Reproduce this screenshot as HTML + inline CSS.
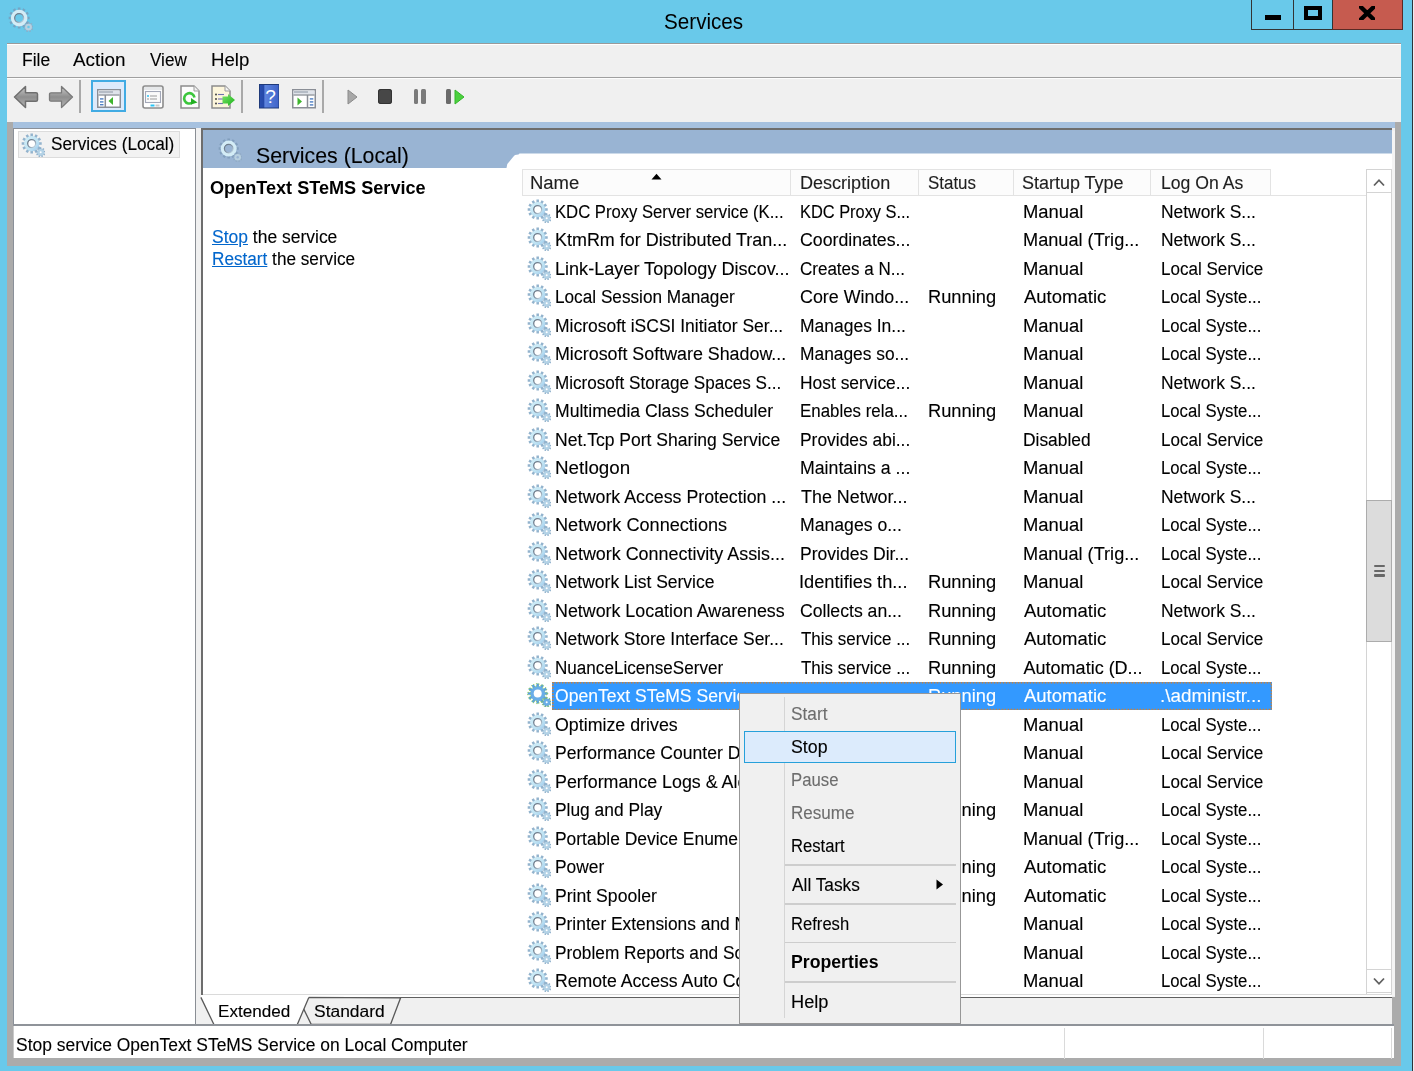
<!DOCTYPE html><html><head><meta charset="utf-8"><title>Services</title><style>
html,body{margin:0;padding:0;}body{width:1414px;height:1071px;position:relative;overflow:hidden;background:#69c9ea;font-family:"Liberation Sans", sans-serif;}
.t{position:absolute;white-space:nowrap;-webkit-text-stroke:0.12px currentColor;}
</style></head><body><div id="root" style="position:absolute;left:0;top:0;width:1414px;height:1071px;overflow:hidden;filter:blur(0.3px)">
<svg width="0" height="0" style="position:absolute">
<defs>
<linearGradient id="gb" x1="0" y1="0" x2="1" y2="1"><stop offset="0" stop-color="#d2eef8"/><stop offset="0.6" stop-color="#bfe3f3"/><stop offset="1" stop-color="#9cc8ec"/></linearGradient>
<linearGradient id="ring" x1="0" y1="0" x2="1" y2="1"><stop offset="0" stop-color="#5f6d7c"/><stop offset="0.55" stop-color="#8797a8"/><stop offset="1" stop-color="#cfe6f2"/></linearGradient>
<symbol id="gear" viewBox="0 0 24 24">
<path d="M9.46,3.71 L9.43,0.58 L11.97,0.58 L11.94,3.71 L13.07,4.01 L14.61,1.29 L16.81,2.56 L15.22,5.25 L16.05,6.08 L18.74,4.49 L20.01,6.69 L17.29,8.23 L17.59,9.36 L20.72,9.33 L20.72,11.87 L17.59,11.84 L17.29,12.97 L20.01,14.51 L18.74,16.71 L16.05,15.12 L15.22,15.95 L16.81,18.64 L14.61,19.91 L13.07,17.19 L11.94,17.49 L11.97,20.62 L9.43,20.62 L9.46,17.49 L8.33,17.19 L6.79,19.91 L4.59,18.64 L6.18,15.95 L5.35,15.12 L2.66,16.71 L1.39,14.51 L4.11,12.97 L3.81,11.84 L0.68,11.87 L0.68,9.33 L3.81,9.36 L4.11,8.23 L1.39,6.69 L2.66,4.49 L5.35,6.08 L6.18,5.25 L4.59,2.56 L6.79,1.29 L8.33,4.01Z" fill="#93b3cd"/>
<circle cx="10.7" cy="10.6" r="7.6" fill="url(#gb)"/>
<circle cx="10.7" cy="10.6" r="4.0" fill="#fff" stroke="url(#ring)" stroke-width="1.3"/>
<path d="M18.92,16.09 L18.88,14.47 L20.52,14.47 L20.48,16.09 L21.17,16.34 L22.18,15.07 L23.43,16.12 L22.36,17.34 L22.72,17.98 L24.32,17.66 L24.60,19.27 L22.99,19.51 L22.87,20.23 L24.29,21.01 L23.48,22.42 L22.09,21.58 L21.53,22.05 L22.12,23.56 L20.58,24.12 L20.07,22.58 L19.33,22.58 L18.82,24.12 L17.28,23.56 L17.87,22.05 L17.31,21.58 L15.92,22.42 L15.11,21.01 L16.53,20.23 L16.41,19.51 L14.80,19.27 L15.08,17.66 L16.68,17.98 L17.04,17.34 L15.97,16.12 L17.22,15.07 L18.23,16.34Z" fill="#8fb0cb"/>
<circle cx="19.7" cy="19.3" r="3.4" fill="#b3d2e6"/>
<circle cx="19.7" cy="19.3" r="1.0" fill="#fff"/>
</symbol>
<symbol id="gearsel" viewBox="0 0 24 24">
<path d="M9.46,3.71 L9.43,0.58 L11.97,0.58 L11.94,3.71 L13.07,4.01 L14.61,1.29 L16.81,2.56 L15.22,5.25 L16.05,6.08 L18.74,4.49 L20.01,6.69 L17.29,8.23 L17.59,9.36 L20.72,9.33 L20.72,11.87 L17.59,11.84 L17.29,12.97 L20.01,14.51 L18.74,16.71 L16.05,15.12 L15.22,15.95 L16.81,18.64 L14.61,19.91 L13.07,17.19 L11.94,17.49 L11.97,20.62 L9.43,20.62 L9.46,17.49 L8.33,17.19 L6.79,19.91 L4.59,18.64 L6.18,15.95 L5.35,15.12 L2.66,16.71 L1.39,14.51 L4.11,12.97 L3.81,11.84 L0.68,11.87 L0.68,9.33 L3.81,9.36 L4.11,8.23 L1.39,6.69 L2.66,4.49 L5.35,6.08 L6.18,5.25 L4.59,2.56 L6.79,1.29 L8.33,4.01Z" fill="#5aa0e0" stroke="#8fd23a" stroke-width="0.9" stroke-dasharray="1.2 1.6"/>
<circle cx="10.7" cy="10.6" r="7.3" fill="#6aaee8"/>
<circle cx="10.7" cy="10.6" r="4.0" fill="#fff"/>
<path d="M18.92,16.09 L18.88,14.47 L20.52,14.47 L20.48,16.09 L21.17,16.34 L22.18,15.07 L23.43,16.12 L22.36,17.34 L22.72,17.98 L24.32,17.66 L24.60,19.27 L22.99,19.51 L22.87,20.23 L24.29,21.01 L23.48,22.42 L22.09,21.58 L21.53,22.05 L22.12,23.56 L20.58,24.12 L20.07,22.58 L19.33,22.58 L18.82,24.12 L17.28,23.56 L17.87,22.05 L17.31,21.58 L15.92,22.42 L15.11,21.01 L16.53,20.23 L16.41,19.51 L14.80,19.27 L15.08,17.66 L16.68,17.98 L17.04,17.34 L15.97,16.12 L17.22,15.07 L18.23,16.34Z" fill="#5a9ad8" stroke="#8fd23a" stroke-width="0.8" stroke-dasharray="1 1.4"/>
<circle cx="19.7" cy="19.3" r="3.2" fill="#6aaee8"/>
<circle cx="19.7" cy="19.3" r="1.0" fill="#fff"/>
</symbol>
<symbol id="gearw" viewBox="0 0 24 24">
<path d="M9.46,3.71 L9.43,0.58 L11.97,0.58 L11.94,3.71 L13.07,4.01 L14.61,1.29 L16.81,2.56 L15.22,5.25 L16.05,6.08 L18.74,4.49 L20.01,6.69 L17.29,8.23 L17.59,9.36 L20.72,9.33 L20.72,11.87 L17.59,11.84 L17.29,12.97 L20.01,14.51 L18.74,16.71 L16.05,15.12 L15.22,15.95 L16.81,18.64 L14.61,19.91 L13.07,17.19 L11.94,17.49 L11.97,20.62 L9.43,20.62 L9.46,17.49 L8.33,17.19 L6.79,19.91 L4.59,18.64 L6.18,15.95 L5.35,15.12 L2.66,16.71 L1.39,14.51 L4.11,12.97 L3.81,11.84 L0.68,11.87 L0.68,9.33 L3.81,9.36 L4.11,8.23 L1.39,6.69 L2.66,4.49 L5.35,6.08 L6.18,5.25 L4.59,2.56 L6.79,1.29 L8.33,4.01Z" fill="#7896b4" opacity="0.7"/>
<circle cx="10.7" cy="10.6" r="8.0" fill="#d3ecf6"/>
<circle cx="10.7" cy="10.6" r="4.3" fill="var(--hole)" stroke="url(#ring)" stroke-width="1.2"/>
<path d="M18.92,16.09 L18.88,14.47 L20.52,14.47 L20.48,16.09 L21.17,16.34 L22.18,15.07 L23.43,16.12 L22.36,17.34 L22.72,17.98 L24.32,17.66 L24.60,19.27 L22.99,19.51 L22.87,20.23 L24.29,21.01 L23.48,22.42 L22.09,21.58 L21.53,22.05 L22.12,23.56 L20.58,24.12 L20.07,22.58 L19.33,22.58 L18.82,24.12 L17.28,23.56 L17.87,22.05 L17.31,21.58 L15.92,22.42 L15.11,21.01 L16.53,20.23 L16.41,19.51 L14.80,19.27 L15.08,17.66 L16.68,17.98 L17.04,17.34 L15.97,16.12 L17.22,15.07 L18.23,16.34Z" fill="#8fa9c3" opacity="0.85"/>
<circle cx="19.7" cy="19.3" r="3.3" fill="#b8d0e0"/>
<circle cx="19.7" cy="19.3" r="1.2" fill="var(--hole)"/>
</symbol>
</defs></svg>
<div style="position:absolute;left:0;top:0;width:1414px;height:1071px;--hole:#69c9ea">
<svg style="position:absolute;left:8px;top:7px;" width="25" height="25" viewBox="0 0 24 24"><use href="#gearw"/></svg>
</div>
<div class="t" style="left:663.84px;top:10.25px;font-size:21.5px;line-height:25.8px;font-weight:400;color:#000;transform:scaleX(0.9605);transform-origin:0 0;-webkit-text-stroke:0;">Services</div>
<div style="position:absolute;left:1412px;top:0px;width:1px;height:1071px;background:#2f3338"></div>
<div style="position:absolute;left:1413px;top:0px;width:1px;height:1071px;background:#e9eef3"></div>
<div style="position:absolute;left:1251px;top:0px;width:42.5px;height:29.5px;box-sizing:border-box;border-left:1px solid #333;border-bottom:1px solid #333;border-right:1px solid #333;background:#69c9ea"></div>
<div style="position:absolute;left:1264.6px;top:15.4px;width:16.6px;height:5px;background:#000"></div>
<div style="position:absolute;left:1293.5px;top:0px;width:39px;height:29.5px;box-sizing:border-box;border-bottom:1px solid #333;background:#69c9ea"></div>
<div style="position:absolute;left:1304px;top:5.5px;width:18.2px;height:14.5px;box-sizing:border-box;border:4px solid #000"></div>
<div style="position:absolute;left:1332.3px;top:0px;width:70.4px;height:29.7px;box-sizing:border-box;border-bottom:1px solid #5a2a25;border-right:1px solid #5a2a25;border-left:1px solid #333;background:#c65b4f"></div>
<svg style="position:absolute;left:1358.8px;top:5.5px" width="16.6" height="14.5" viewBox="0 0 16.6 14.5"><path d="M0.3,-0.5 L16.3,15 M16.3,-0.5 L0.3,15" stroke="#000" stroke-width="4.3"/></svg>
<div style="position:absolute;left:7px;top:43px;width:1394px;height:1022.6px;background:#ababab"></div>
<div style="position:absolute;left:7px;top:43px;width:1394px;height:34px;background:#f0f0f0;border-top:1px solid #9a9a9a;box-sizing:border-box"></div>
<div style="position:absolute;left:7px;top:44px;width:1394px;height:1px;background:#fff"></div>
<div class="t" style="left:21.73px;top:50.36px;font-size:18px;line-height:21.6px;font-weight:400;color:#000;transform:scaleX(0.9704);transform-origin:0 0;">File</div>
<div class="t" style="left:73.30px;top:50.36px;font-size:18px;line-height:21.6px;font-weight:400;color:#000;transform:scaleX(1.0469);transform-origin:0 0;">Action</div>
<div class="t" style="left:149.70px;top:50.36px;font-size:18px;line-height:21.6px;font-weight:400;color:#000;transform:scaleX(0.9513);transform-origin:0 0;">View</div>
<div class="t" style="left:210.57px;top:50.36px;font-size:18px;line-height:21.6px;font-weight:400;color:#000;transform:scaleX(1.0343);transform-origin:0 0;">Help</div>
<div style="position:absolute;left:7px;top:76.8px;width:1394px;height:1.5px;background:#a0a0a0"></div>
<div style="position:absolute;left:7px;top:78.3px;width:1394px;height:1px;background:#fdfdfd"></div>
<div style="position:absolute;left:7px;top:79.3px;width:1394px;height:42.7px;background:#f0f0f0"></div>
<svg width="0" height="0" style="position:absolute"><defs>
<linearGradient id="ar" x1="0" y1="0" x2="0" y2="1"><stop offset="0" stop-color="#c9c9c9"/><stop offset="0.5" stop-color="#8e8e8e"/><stop offset="1" stop-color="#b5b5b5"/></linearGradient>
<linearGradient id="grn" x1="0" y1="0" x2="1" y2="1"><stop offset="0" stop-color="#7ee36a"/><stop offset="1" stop-color="#19b319"/></linearGradient>
<linearGradient id="hlp" x1="0" y1="0" x2="1" y2="0"><stop offset="0" stop-color="#2a4fb0"/><stop offset="0.25" stop-color="#2448a8"/><stop offset="0.26" stop-color="#5f86df"/><stop offset="1" stop-color="#3e62c8"/></linearGradient>
</defs></svg>
<svg style="position:absolute;left:13px;top:85px" width="26" height="24" viewBox="0 0 26 24"><path d="M1.5,12 L12.5,1.5 L12.5,7.8 L23,7.8 Q24.5,7.8 24.5,9.3 L24.5,14.7 Q24.5,16.2 23,16.2 L12.5,16.2 L12.5,22.5 Z" fill="url(#ar)" stroke="#6f6f6f" stroke-width="1.5" stroke-linejoin="round"/></svg>
<svg style="position:absolute;left:48px;top:85px" width="26" height="24" viewBox="0 0 26 24"><path d="M24.5,12 L13.5,1.5 L13.5,7.8 L3,7.8 Q1.5,7.8 1.5,9.3 L1.5,14.7 Q1.5,16.2 3,16.2 L13.5,16.2 L13.5,22.5 Z" fill="url(#ar)" stroke="#7a7a7a" stroke-width="1.3" stroke-linejoin="round"/></svg>
<div style="position:absolute;left:79px;top:80px;width:1.5px;height:33px;background:#a9a9a9"></div>
<div style="position:absolute;left:91px;top:80.3px;width:35px;height:32.2px;box-sizing:border-box;border:2px solid #41abe3;background:#dceafb"></div>
<svg style="position:absolute;left:97px;top:89px" width="24" height="19" viewBox="0 0 24 19"><rect x="0.75" y="0.75" width="22.5" height="17.5" fill="#fff" stroke="#8a8e96" stroke-width="1.5"/><rect x="1.5" y="1.5" width="21" height="4" fill="#dfe3ea"/><line x1="2" y1="3" x2="16" y2="3" stroke="#9aa2ae" stroke-width="1.2"/><line x1="1.5" y1="6" x2="22.5" y2="6" stroke="#8a8e96" stroke-width="1.3"/><line x1="8.3" y1="6" x2="8.3" y2="18" stroke="#8a8e96" stroke-width="1.5"/><rect x="3" y="9.2" width="3.5" height="1.4" fill="#4f7fc4"/><rect x="3" y="12.2" width="3.5" height="1.4" fill="#4f7fc4"/><rect x="3" y="15" width="3.5" height="1.4" fill="#4f7fc4"/><path d="M11.5,12 L16,8 L16,16 Z" fill="#3fb52e"/></svg>
<svg style="position:absolute;left:142px;top:84.5px" width="22" height="24" viewBox="0 0 22 24"><rect x="1" y="1" width="20" height="22" rx="2" fill="#fff" stroke="#8c8c8c" stroke-width="1.6"/><rect x="2" y="2" width="18" height="3" fill="#e6e8ea"/><rect x="3.5" y="6.5" width="15" height="11" fill="#fafafa" stroke="#a3a8b8" stroke-width="1.1"/><circle cx="6" cy="11" r="1" fill="#2ec0f0"/><line x1="8" y1="11" x2="15" y2="11" stroke="#9a9a9a" stroke-width="1"/><circle cx="6" cy="14" r="0.8" fill="#888"/><line x1="8" y1="14" x2="15" y2="14" stroke="#9a9a9a" stroke-width="1"/><rect x="8.5" y="19.5" width="4" height="2" fill="#28c4f4"/><rect x="13.5" y="19.5" width="4" height="2" fill="#c8c8c8"/></svg>
<svg style="position:absolute;left:179.5px;top:84.5px" width="20" height="24" viewBox="0 0 20 24"><path d="M1,1 L14,1 L19,6 L19,23 L1,23 Z" fill="#fcfcfc" stroke="#8c8c8c" stroke-width="1.5"/><path d="M14,1 L14,6 L19,6" fill="#f0f0f0" stroke="#9c9c9c" stroke-width="1"/><path d="M12.5,17.5 A5.2,5.2 0 1 1 14.5,12.5" fill="none" stroke="#3cc63c" stroke-width="2.6"/><path d="M11,13 L17.5,17.5 L11,19.5 Z" fill="#22b022"/></svg>
<svg style="position:absolute;left:211px;top:84.5px" width="25" height="24" viewBox="0 0 25 24"><path d="M1,1 L14,1 L19,6 L19,23 L1,23 Z" fill="#fdf6dc" stroke="#8c8c8c" stroke-width="1.5"/><path d="M14,1 L14,6 L19,6" fill="#f4f4f4" stroke="#9c9c9c" stroke-width="1"/><circle cx="5" cy="9.5" r="0.9" fill="#333"/><line x1="7" y1="9.5" x2="13" y2="9.5" stroke="#7070b0" stroke-width="1.1"/><circle cx="5" cy="14" r="0.9" fill="#333"/><line x1="7" y1="14" x2="12" y2="14" stroke="#7070b0" stroke-width="1.1"/><circle cx="5" cy="18.5" r="0.9" fill="#333"/><line x1="7" y1="18.5" x2="12" y2="18.5" stroke="#7070b0" stroke-width="1.1"/><path d="M11.5,11.5 L17,11.5 L17,9 L24,15 L17,21 L17,18.5 L11.5,18.5 Z" fill="url(#grn)"/></svg>
<div style="position:absolute;left:241.3px;top:80px;width:1.5px;height:33px;background:#a9a9a9"></div>
<svg style="position:absolute;left:258.5px;top:84px" width="20.5" height="24.5" viewBox="0 0 20.5 24.5"><rect x="0.5" y="0.5" width="19.5" height="23.5" fill="url(#hlp)" stroke="#1f3a7a" stroke-width="1"/><text x="11.5" y="19" font-family="Liberation Sans" font-size="19" font-weight="400" fill="#fff" text-anchor="middle">?</text></svg>
<svg style="position:absolute;left:292px;top:88.5px" width="24" height="20" viewBox="0 0 24 20"><rect x="0.75" y="0.75" width="22.5" height="18" fill="#fff" stroke="#8a8e96" stroke-width="1.5"/><rect x="1.5" y="1.5" width="21" height="4" fill="#dfe3ea"/><line x1="2" y1="3" x2="16" y2="3" stroke="#9aa2ae" stroke-width="1.2"/><line x1="1.5" y1="6" x2="22.5" y2="6" stroke="#8a8e96" stroke-width="1.3"/><line x1="15.5" y1="6" x2="15.5" y2="19" stroke="#8a8e96" stroke-width="1.5"/><rect x="17.8" y="9.2" width="3.5" height="1.4" fill="#4f7fc4"/><rect x="17.8" y="12.2" width="3.5" height="1.4" fill="#4f7fc4"/><rect x="17.8" y="15.2" width="3.5" height="1.4" fill="#4f7fc4"/><path d="M5.5,8.5 L10,12.5 L5.5,16.5 Z" fill="#3fb52e"/></svg>
<div style="position:absolute;left:322.2px;top:80px;width:1.5px;height:33px;background:#a9a9a9"></div>
<svg style="position:absolute;left:347px;top:88.5px" width="11" height="16" viewBox="0 0 11 16"><path d="M1,1 L10,8 L1,15 Z" fill="#a8a8a8" stroke="#8a8a8a" stroke-width="1" stroke-linejoin="round"/></svg>
<div style="position:absolute;left:377.7px;top:89px;width:14.7px;height:15px;background:#474747;border-radius:3px;box-shadow:inset 0 0 0 1px #333"></div>
<div style="position:absolute;left:413.5px;top:89px;width:4.6px;height:15px;background:#7a7a7a;border-radius:1.5px"></div>
<div style="position:absolute;left:420.9px;top:89px;width:4.8px;height:15px;background:#7a7a7a;border-radius:1.5px"></div>
<div style="position:absolute;left:446.4px;top:89px;width:4.8px;height:15px;background:#6a6a6a;border-radius:1.5px"></div>
<svg style="position:absolute;left:453.5px;top:88.5px" width="11" height="16" viewBox="0 0 11 16"><path d="M1,1 L10,8 L1,15 Z" fill="#4bd13e" stroke="#33b52a" stroke-width="1" stroke-linejoin="round"/></svg>
<div style="position:absolute;left:13px;top:122px;width:1382.4px;height:6.3px;background:#a6c1df"></div>
<div style="position:absolute;left:13px;top:128.2px;width:183px;height:898.3px;box-sizing:border-box;background:#fff;border-left:1.1px solid #8a9099;border-top:1.4px solid #8a9099;border-right:1.2px solid #8a8e94"></div>
<div style="position:absolute;left:196px;top:128.2px;width:5px;height:868px;background:#f0f0f0"></div>
<div style="position:absolute;left:17.5px;top:131.2px;width:162px;height:26.4px;box-sizing:border-box;background:#f2f2f2;border:1.3px solid #dcdcdc"></div>
<svg style="position:absolute;left:20.5px;top:132.5px;" width="24" height="24" viewBox="0 0 24 24"><use href="#gear"/></svg>
<div class="t" style="left:50.84px;top:134.46px;font-size:18px;line-height:21.6px;font-weight:400;color:#000;transform:scaleX(0.9551);transform-origin:0 0;">Services (Local)</div>
<div style="position:absolute;left:201px;top:128.4px;width:1194.4px;height:868.6px;background:#f0f0f0"></div>
<div style="position:absolute;left:201px;top:128.4px;width:1191px;height:867.6px;box-sizing:border-box;background:#fff;border-top:2.6px solid #6d6d6d;border-left:2.6px solid #6d6d6d"></div>
<div style="position:absolute;left:1391.6px;top:131px;width:3px;height:865px;background:#f4f4f4"></div>
<div style="position:absolute;left:203.4px;top:130.4px;width:1188.2px;height:37.9px;background:#99b4d3"></div>
<svg style="position:absolute;left:500px;top:150px" width="892" height="20" viewBox="0 0 892 20"><path d="M6.4,18.6 L7.3,14 L9,12 L13.5,6.5 L15,5 L18.5,4.5 L19.5,3.4 L892,3.4 L892,20 L6,20 Z" fill="#fff"/></svg>
<svg style="position:absolute;left:218px;top:138.1px;--hole:#99b4d3" width="24" height="24" viewBox="0 0 24 24"><use href="#gearw"/></svg>
<div class="t" style="left:256.45px;top:142.00px;font-size:22.5px;line-height:27.0px;font-weight:400;color:#000;transform:scaleX(0.9472);transform-origin:0 0;">Services (Local)</div>
<div class="t" style="left:210.29px;top:177.56px;font-size:18px;line-height:21.6px;font-weight:700;color:#000;transform:scaleX(1.0056);transform-origin:0 0;-webkit-text-stroke:0;">OpenText STeMS Service</div>
<div class="t" style="left:211.50px;top:226.76px;font-size:18px;line-height:21.6px;font-weight:400;color:#000;transform:scaleX(0.9711);transform-origin:0 0;"><span style="color:#0066cc;text-decoration:underline">Stop</span> the service</div>
<div class="t" style="left:211.50px;top:248.96px;font-size:18px;line-height:21.6px;font-weight:400;color:#000;transform:scaleX(0.9537);transform-origin:0 0;"><span style="color:#0066cc;text-decoration:underline">Restart</span> the service</div>
<div style="position:absolute;left:522px;top:168.9px;width:749.4px;height:27.6px;box-sizing:border-box;background:#fcfcfc;border-top:1.3px solid #e3e3e3;border-bottom:1.3px solid #e3e3e3;border-left:1.3px solid #e3e3e3"></div>
<div style="position:absolute;left:1271.4px;top:195.2px;width:95px;height:1.3px;background:#e3e3e3"></div>
<div style="position:absolute;left:790.2px;top:168.9px;width:1.3px;height:27.6px;background:#e3e3e3"></div>
<div class="t" style="left:530.37px;top:172.96px;font-size:18px;line-height:21.6px;font-weight:400;color:#1e1e1e;transform:scaleX(1.0261);transform-origin:0 0;">Name</div>
<div style="position:absolute;left:918.2px;top:168.9px;width:1.3px;height:27.6px;background:#e3e3e3"></div>
<div class="t" style="left:800.30px;top:172.96px;font-size:18px;line-height:21.6px;font-weight:400;color:#1e1e1e;transform:scaleX(1.0023);transform-origin:0 0;">Description</div>
<div style="position:absolute;left:1013.2px;top:168.9px;width:1.3px;height:27.6px;background:#e3e3e3"></div>
<div class="t" style="left:928.06px;top:172.96px;font-size:18px;line-height:21.6px;font-weight:400;color:#1e1e1e;transform:scaleX(0.9400);transform-origin:0 0;">Status</div>
<div style="position:absolute;left:1149.9px;top:168.9px;width:1.3px;height:27.6px;background:#e3e3e3"></div>
<div class="t" style="left:1022.20px;top:172.96px;font-size:18px;line-height:21.6px;font-weight:400;color:#1e1e1e;transform:scaleX(0.9980);transform-origin:0 0;">Startup Type</div>
<div style="position:absolute;left:1270.1000000000001px;top:168.9px;width:1.3px;height:27.6px;background:#e3e3e3"></div>
<div class="t" style="left:1160.72px;top:172.96px;font-size:18px;line-height:21.6px;font-weight:400;color:#1e1e1e;transform:scaleX(0.9795);transform-origin:0 0;">Log On As</div>
<svg style="position:absolute;left:650.5px;top:172.5px" width="11" height="7" viewBox="0 0 11 7"><path d="M0.5,6.5 L5.5,0.8 L10.5,6.5 Z" fill="#000"/></svg>
<svg style="position:absolute;left:527.3px;top:198.7px;" width="24" height="24" viewBox="0 0 24 24"><use href="#gear"/></svg>
<div class="t" style="left:554.87px;top:201.56px;font-size:18px;line-height:21.6px;font-weight:400;color:#000;transform:scaleX(0.9253);transform-origin:0 0;">KDC Proxy Server service (K...</div>
<div class="t" style="left:800.39px;top:201.56px;font-size:18px;line-height:21.6px;font-weight:400;color:#000;transform:scaleX(0.9101);transform-origin:0 0;">KDC Proxy S...</div>
<div class="t" style="left:1022.58px;top:201.56px;font-size:18px;line-height:21.6px;font-weight:400;color:#000;transform:scaleX(1.0228);transform-origin:0 0;">Manual</div>
<div class="t" style="left:1161.13px;top:201.56px;font-size:18px;line-height:21.6px;font-weight:400;color:#000;transform:scaleX(0.9677);transform-origin:0 0;">Network S...</div>
<svg style="position:absolute;left:527.3px;top:227.2px;" width="24" height="24" viewBox="0 0 24 24"><use href="#gear"/></svg>
<div class="t" style="left:554.80px;top:230.06px;font-size:18px;line-height:21.6px;font-weight:400;color:#000;transform:scaleX(0.9965);transform-origin:0 0;">KtmRm for Distributed Tran...</div>
<div class="t" style="left:800.32px;top:230.06px;font-size:18px;line-height:21.6px;font-weight:400;color:#000;transform:scaleX(0.9845);transform-origin:0 0;">Coordinates...</div>
<div class="t" style="left:1022.59px;top:230.06px;font-size:18px;line-height:21.6px;font-weight:400;color:#000;transform:scaleX(1.0088);transform-origin:0 0;">Manual (Trig...</div>
<div class="t" style="left:1161.13px;top:230.06px;font-size:18px;line-height:21.6px;font-weight:400;color:#000;transform:scaleX(0.9677);transform-origin:0 0;">Network S...</div>
<svg style="position:absolute;left:527.3px;top:255.7px;" width="24" height="24" viewBox="0 0 24 24"><use href="#gear"/></svg>
<div class="t" style="left:554.80px;top:258.56px;font-size:18px;line-height:21.6px;font-weight:400;color:#000;transform:scaleX(1.0043);transform-origin:0 0;">Link-Layer Topology Discov...</div>
<div class="t" style="left:800.36px;top:258.56px;font-size:18px;line-height:21.6px;font-weight:400;color:#000;transform:scaleX(0.9450);transform-origin:0 0;">Creates a N...</div>
<div class="t" style="left:1022.58px;top:258.56px;font-size:18px;line-height:21.6px;font-weight:400;color:#000;transform:scaleX(1.0228);transform-origin:0 0;">Manual</div>
<div class="t" style="left:1161.15px;top:258.56px;font-size:18px;line-height:21.6px;font-weight:400;color:#000;transform:scaleX(0.9453);transform-origin:0 0;">Local Service</div>
<svg style="position:absolute;left:527.3px;top:284.2px;" width="24" height="24" viewBox="0 0 24 24"><use href="#gear"/></svg>
<div class="t" style="left:554.84px;top:287.06px;font-size:18px;line-height:21.6px;font-weight:400;color:#000;transform:scaleX(0.9551);transform-origin:0 0;">Local Session Manager</div>
<div class="t" style="left:800.31px;top:287.06px;font-size:18px;line-height:21.6px;font-weight:400;color:#000;transform:scaleX(0.9917);transform-origin:0 0;">Core Windo...</div>
<div class="t" style="left:927.78px;top:287.06px;font-size:18px;line-height:21.6px;font-weight:400;color:#000;transform:scaleX(1.0154);transform-origin:0 0;">Running</div>
<div class="t" style="left:1023.60px;top:287.06px;font-size:18px;line-height:21.6px;font-weight:400;color:#000;transform:scaleX(1.0275);transform-origin:0 0;">Automatic</div>
<div class="t" style="left:1161.17px;top:287.06px;font-size:18px;line-height:21.6px;font-weight:400;color:#000;transform:scaleX(0.9283);transform-origin:0 0;">Local Syste...</div>
<svg style="position:absolute;left:527.3px;top:312.7px;" width="24" height="24" viewBox="0 0 24 24"><use href="#gear"/></svg>
<div class="t" style="left:554.83px;top:315.56px;font-size:18px;line-height:21.6px;font-weight:400;color:#000;transform:scaleX(0.9708);transform-origin:0 0;">Microsoft iSCSI Initiator Ser...</div>
<div class="t" style="left:800.33px;top:315.56px;font-size:18px;line-height:21.6px;font-weight:400;color:#000;transform:scaleX(0.9710);transform-origin:0 0;">Manages In...</div>
<div class="t" style="left:1022.58px;top:315.56px;font-size:18px;line-height:21.6px;font-weight:400;color:#000;transform:scaleX(1.0228);transform-origin:0 0;">Manual</div>
<div class="t" style="left:1161.17px;top:315.56px;font-size:18px;line-height:21.6px;font-weight:400;color:#000;transform:scaleX(0.9283);transform-origin:0 0;">Local Syste...</div>
<svg style="position:absolute;left:527.3px;top:341.2px;" width="24" height="24" viewBox="0 0 24 24"><use href="#gear"/></svg>
<div class="t" style="left:554.81px;top:344.06px;font-size:18px;line-height:21.6px;font-weight:400;color:#000;transform:scaleX(0.9918);transform-origin:0 0;">Microsoft Software Shadow...</div>
<div class="t" style="left:800.34px;top:344.06px;font-size:18px;line-height:21.6px;font-weight:400;color:#000;transform:scaleX(0.9649);transform-origin:0 0;">Manages so...</div>
<div class="t" style="left:1022.58px;top:344.06px;font-size:18px;line-height:21.6px;font-weight:400;color:#000;transform:scaleX(1.0228);transform-origin:0 0;">Manual</div>
<div class="t" style="left:1161.17px;top:344.06px;font-size:18px;line-height:21.6px;font-weight:400;color:#000;transform:scaleX(0.9283);transform-origin:0 0;">Local Syste...</div>
<svg style="position:absolute;left:527.3px;top:369.7px;" width="24" height="24" viewBox="0 0 24 24"><use href="#gear"/></svg>
<div class="t" style="left:554.85px;top:372.56px;font-size:18px;line-height:21.6px;font-weight:400;color:#000;transform:scaleX(0.9500);transform-origin:0 0;">Microsoft Storage Spaces S...</div>
<div class="t" style="left:800.33px;top:372.56px;font-size:18px;line-height:21.6px;font-weight:400;color:#000;transform:scaleX(0.9670);transform-origin:0 0;">Host service...</div>
<div class="t" style="left:1022.58px;top:372.56px;font-size:18px;line-height:21.6px;font-weight:400;color:#000;transform:scaleX(1.0228);transform-origin:0 0;">Manual</div>
<div class="t" style="left:1161.13px;top:372.56px;font-size:18px;line-height:21.6px;font-weight:400;color:#000;transform:scaleX(0.9677);transform-origin:0 0;">Network S...</div>
<svg style="position:absolute;left:527.3px;top:398.2px;" width="24" height="24" viewBox="0 0 24 24"><use href="#gear"/></svg>
<div class="t" style="left:554.82px;top:401.06px;font-size:18px;line-height:21.6px;font-weight:400;color:#000;transform:scaleX(0.9779);transform-origin:0 0;">Multimedia Class Scheduler</div>
<div class="t" style="left:800.36px;top:401.06px;font-size:18px;line-height:21.6px;font-weight:400;color:#000;transform:scaleX(0.9372);transform-origin:0 0;">Enables rela...</div>
<div class="t" style="left:927.78px;top:401.06px;font-size:18px;line-height:21.6px;font-weight:400;color:#000;transform:scaleX(1.0154);transform-origin:0 0;">Running</div>
<div class="t" style="left:1022.58px;top:401.06px;font-size:18px;line-height:21.6px;font-weight:400;color:#000;transform:scaleX(1.0228);transform-origin:0 0;">Manual</div>
<div class="t" style="left:1161.17px;top:401.06px;font-size:18px;line-height:21.6px;font-weight:400;color:#000;transform:scaleX(0.9283);transform-origin:0 0;">Local Syste...</div>
<svg style="position:absolute;left:527.3px;top:426.7px;" width="24" height="24" viewBox="0 0 24 24"><use href="#gear"/></svg>
<div class="t" style="left:554.83px;top:429.56px;font-size:18px;line-height:21.6px;font-weight:400;color:#000;transform:scaleX(0.9742);transform-origin:0 0;">Net.Tcp Port Sharing Service</div>
<div class="t" style="left:800.33px;top:429.56px;font-size:18px;line-height:21.6px;font-weight:400;color:#000;transform:scaleX(0.9670);transform-origin:0 0;">Provides abi...</div>
<div class="t" style="left:1022.63px;top:429.56px;font-size:18px;line-height:21.6px;font-weight:400;color:#000;transform:scaleX(0.9662);transform-origin:0 0;">Disabled</div>
<div class="t" style="left:1161.15px;top:429.56px;font-size:18px;line-height:21.6px;font-weight:400;color:#000;transform:scaleX(0.9453);transform-origin:0 0;">Local Service</div>
<svg style="position:absolute;left:527.3px;top:455.2px;" width="24" height="24" viewBox="0 0 24 24"><use href="#gear"/></svg>
<div class="t" style="left:554.76px;top:458.06px;font-size:18px;line-height:21.6px;font-weight:400;color:#000;transform:scaleX(1.0429);transform-origin:0 0;">Netlogon</div>
<div class="t" style="left:800.32px;top:458.06px;font-size:18px;line-height:21.6px;font-weight:400;color:#000;transform:scaleX(0.9845);transform-origin:0 0;">Maintains a ...</div>
<div class="t" style="left:1022.58px;top:458.06px;font-size:18px;line-height:21.6px;font-weight:400;color:#000;transform:scaleX(1.0228);transform-origin:0 0;">Manual</div>
<div class="t" style="left:1161.17px;top:458.06px;font-size:18px;line-height:21.6px;font-weight:400;color:#000;transform:scaleX(0.9283);transform-origin:0 0;">Local Syste...</div>
<svg style="position:absolute;left:527.3px;top:483.7px;" width="24" height="24" viewBox="0 0 24 24"><use href="#gear"/></svg>
<div class="t" style="left:554.81px;top:486.56px;font-size:18px;line-height:21.6px;font-weight:400;color:#000;transform:scaleX(0.9875);transform-origin:0 0;">Network Access Protection ...</div>
<div class="t" style="left:801.30px;top:486.56px;font-size:18px;line-height:21.6px;font-weight:400;color:#000;transform:scaleX(0.9943);transform-origin:0 0;">The Networ...</div>
<div class="t" style="left:1022.58px;top:486.56px;font-size:18px;line-height:21.6px;font-weight:400;color:#000;transform:scaleX(1.0228);transform-origin:0 0;">Manual</div>
<div class="t" style="left:1161.13px;top:486.56px;font-size:18px;line-height:21.6px;font-weight:400;color:#000;transform:scaleX(0.9677);transform-origin:0 0;">Network S...</div>
<svg style="position:absolute;left:527.3px;top:512.2px;" width="24" height="24" viewBox="0 0 24 24"><use href="#gear"/></svg>
<div class="t" style="left:554.79px;top:515.06px;font-size:18px;line-height:21.6px;font-weight:400;color:#000;transform:scaleX(1.0059);transform-origin:0 0;">Network Connections</div>
<div class="t" style="left:800.32px;top:515.06px;font-size:18px;line-height:21.6px;font-weight:400;color:#000;transform:scaleX(0.9794);transform-origin:0 0;">Manages o...</div>
<div class="t" style="left:1022.58px;top:515.06px;font-size:18px;line-height:21.6px;font-weight:400;color:#000;transform:scaleX(1.0228);transform-origin:0 0;">Manual</div>
<div class="t" style="left:1161.17px;top:515.06px;font-size:18px;line-height:21.6px;font-weight:400;color:#000;transform:scaleX(0.9283);transform-origin:0 0;">Local Syste...</div>
<svg style="position:absolute;left:527.3px;top:540.7px;" width="24" height="24" viewBox="0 0 24 24"><use href="#gear"/></svg>
<div class="t" style="left:554.80px;top:543.56px;font-size:18px;line-height:21.6px;font-weight:400;color:#000;transform:scaleX(0.9952);transform-origin:0 0;">Network Connectivity Assis...</div>
<div class="t" style="left:800.33px;top:543.56px;font-size:18px;line-height:21.6px;font-weight:400;color:#000;transform:scaleX(0.9736);transform-origin:0 0;">Provides Dir...</div>
<div class="t" style="left:1022.59px;top:543.56px;font-size:18px;line-height:21.6px;font-weight:400;color:#000;transform:scaleX(1.0088);transform-origin:0 0;">Manual (Trig...</div>
<div class="t" style="left:1161.17px;top:543.56px;font-size:18px;line-height:21.6px;font-weight:400;color:#000;transform:scaleX(0.9283);transform-origin:0 0;">Local Syste...</div>
<svg style="position:absolute;left:527.3px;top:569.2px;" width="24" height="24" viewBox="0 0 24 24"><use href="#gear"/></svg>
<div class="t" style="left:554.83px;top:572.06px;font-size:18px;line-height:21.6px;font-weight:400;color:#000;transform:scaleX(0.9722);transform-origin:0 0;">Network List Service</div>
<div class="t" style="left:799.27px;top:572.06px;font-size:18px;line-height:21.6px;font-weight:400;color:#000;transform:scaleX(1.0135);transform-origin:0 0;">Identifies th...</div>
<div class="t" style="left:927.78px;top:572.06px;font-size:18px;line-height:21.6px;font-weight:400;color:#000;transform:scaleX(1.0154);transform-origin:0 0;">Running</div>
<div class="t" style="left:1022.58px;top:572.06px;font-size:18px;line-height:21.6px;font-weight:400;color:#000;transform:scaleX(1.0228);transform-origin:0 0;">Manual</div>
<div class="t" style="left:1161.15px;top:572.06px;font-size:18px;line-height:21.6px;font-weight:400;color:#000;transform:scaleX(0.9453);transform-origin:0 0;">Local Service</div>
<svg style="position:absolute;left:527.3px;top:597.7px;" width="24" height="24" viewBox="0 0 24 24"><use href="#gear"/></svg>
<div class="t" style="left:554.81px;top:600.56px;font-size:18px;line-height:21.6px;font-weight:400;color:#000;transform:scaleX(0.9909);transform-origin:0 0;">Network Location Awareness</div>
<div class="t" style="left:800.32px;top:600.56px;font-size:18px;line-height:21.6px;font-weight:400;color:#000;transform:scaleX(0.9794);transform-origin:0 0;">Collects an...</div>
<div class="t" style="left:927.78px;top:600.56px;font-size:18px;line-height:21.6px;font-weight:400;color:#000;transform:scaleX(1.0154);transform-origin:0 0;">Running</div>
<div class="t" style="left:1023.60px;top:600.56px;font-size:18px;line-height:21.6px;font-weight:400;color:#000;transform:scaleX(1.0275);transform-origin:0 0;">Automatic</div>
<div class="t" style="left:1161.13px;top:600.56px;font-size:18px;line-height:21.6px;font-weight:400;color:#000;transform:scaleX(0.9677);transform-origin:0 0;">Network S...</div>
<svg style="position:absolute;left:527.3px;top:626.2px;" width="24" height="24" viewBox="0 0 24 24"><use href="#gear"/></svg>
<div class="t" style="left:554.83px;top:629.06px;font-size:18px;line-height:21.6px;font-weight:400;color:#000;transform:scaleX(0.9688);transform-origin:0 0;">Network Store Interface Ser...</div>
<div class="t" style="left:801.30px;top:629.06px;font-size:18px;line-height:21.6px;font-weight:400;color:#000;transform:scaleX(0.9417);transform-origin:0 0;">This service ...</div>
<div class="t" style="left:927.78px;top:629.06px;font-size:18px;line-height:21.6px;font-weight:400;color:#000;transform:scaleX(1.0154);transform-origin:0 0;">Running</div>
<div class="t" style="left:1023.60px;top:629.06px;font-size:18px;line-height:21.6px;font-weight:400;color:#000;transform:scaleX(1.0275);transform-origin:0 0;">Automatic</div>
<div class="t" style="left:1161.15px;top:629.06px;font-size:18px;line-height:21.6px;font-weight:400;color:#000;transform:scaleX(0.9453);transform-origin:0 0;">Local Service</div>
<svg style="position:absolute;left:527.3px;top:654.7px;" width="24" height="24" viewBox="0 0 24 24"><use href="#gear"/></svg>
<div class="t" style="left:554.85px;top:657.56px;font-size:18px;line-height:21.6px;font-weight:400;color:#000;transform:scaleX(0.9494);transform-origin:0 0;">NuanceLicenseServer</div>
<div class="t" style="left:801.30px;top:657.56px;font-size:18px;line-height:21.6px;font-weight:400;color:#000;transform:scaleX(0.9417);transform-origin:0 0;">This service ...</div>
<div class="t" style="left:927.78px;top:657.56px;font-size:18px;line-height:21.6px;font-weight:400;color:#000;transform:scaleX(1.0154);transform-origin:0 0;">Running</div>
<div class="t" style="left:1023.60px;top:657.56px;font-size:18px;line-height:21.6px;font-weight:400;color:#000;transform:scaleX(1.0000);transform-origin:0 0;">Automatic (D...</div>
<div class="t" style="left:1161.17px;top:657.56px;font-size:18px;line-height:21.6px;font-weight:400;color:#000;transform:scaleX(0.9283);transform-origin:0 0;">Local Syste...</div>
<div style="position:absolute;left:551.8px;top:682.0px;width:720.4px;height:28.2px;background:#3399ff"></div>
<svg style="position:absolute;left:551.8px;top:682.0px" width="720.4" height="28.2" viewBox="0 0 720.4 28.2"><rect x="0.75" y="0.75" width="718.9" height="26.7" fill="none" stroke="#c8823e" stroke-width="1.5" stroke-dasharray="1.6 1.4"/></svg>
<svg style="position:absolute;left:527.3px;top:683.2px;" width="24" height="24" viewBox="0 0 24 24"><use href="#gearsel"/></svg>
<div class="t" style="left:554.80px;top:686.06px;font-size:18px;line-height:21.6px;font-weight:400;color:#fff;transform:scaleX(0.975);transform-origin:0 0;">OpenText STeMS Service</div>
<div class="t" style="left:927.78px;top:686.06px;font-size:18px;line-height:21.6px;font-weight:400;color:#fff;transform:scaleX(1.0154);transform-origin:0 0;">Running</div>
<div class="t" style="left:1023.60px;top:686.06px;font-size:18px;line-height:21.6px;font-weight:400;color:#fff;transform:scaleX(1.0275);transform-origin:0 0;">Automatic</div>
<div class="t" style="left:1160.01px;top:686.06px;font-size:18px;line-height:21.6px;font-weight:400;color:#fff;transform:scaleX(1.0468);transform-origin:0 0;">.\administr...</div>
<svg style="position:absolute;left:527.3px;top:711.7px;" width="24" height="24" viewBox="0 0 24 24"><use href="#gear"/></svg>
<div class="t" style="left:554.81px;top:714.56px;font-size:18px;line-height:21.6px;font-weight:400;color:#000;transform:scaleX(0.9894);transform-origin:0 0;">Optimize drives</div>
<div class="t" style="left:1022.58px;top:714.56px;font-size:18px;line-height:21.6px;font-weight:400;color:#000;transform:scaleX(1.0228);transform-origin:0 0;">Manual</div>
<div class="t" style="left:1161.17px;top:714.56px;font-size:18px;line-height:21.6px;font-weight:400;color:#000;transform:scaleX(0.9283);transform-origin:0 0;">Local Syste...</div>
<svg style="position:absolute;left:527.3px;top:740.2px;" width="24" height="24" viewBox="0 0 24 24"><use href="#gear"/></svg>
<div class="t" style="left:554.80px;top:743.06px;font-size:18px;line-height:21.6px;font-weight:400;color:#000;transform:scaleX(0.975);transform-origin:0 0;">Performance Counter DLL Host</div>
<div class="t" style="left:1022.58px;top:743.06px;font-size:18px;line-height:21.6px;font-weight:400;color:#000;transform:scaleX(1.0228);transform-origin:0 0;">Manual</div>
<div class="t" style="left:1161.15px;top:743.06px;font-size:18px;line-height:21.6px;font-weight:400;color:#000;transform:scaleX(0.9453);transform-origin:0 0;">Local Service</div>
<svg style="position:absolute;left:527.3px;top:768.7px;" width="24" height="24" viewBox="0 0 24 24"><use href="#gear"/></svg>
<div class="t" style="left:554.80px;top:771.56px;font-size:18px;line-height:21.6px;font-weight:400;color:#000;transform:scaleX(0.991);transform-origin:0 0;">Performance Logs &amp; Alerts</div>
<div class="t" style="left:1022.58px;top:771.56px;font-size:18px;line-height:21.6px;font-weight:400;color:#000;transform:scaleX(1.0228);transform-origin:0 0;">Manual</div>
<div class="t" style="left:1161.15px;top:771.56px;font-size:18px;line-height:21.6px;font-weight:400;color:#000;transform:scaleX(0.9453);transform-origin:0 0;">Local Service</div>
<svg style="position:absolute;left:527.3px;top:797.2px;" width="24" height="24" viewBox="0 0 24 24"><use href="#gear"/></svg>
<div class="t" style="left:554.83px;top:800.06px;font-size:18px;line-height:21.6px;font-weight:400;color:#000;transform:scaleX(0.9655);transform-origin:0 0;">Plug and Play</div>
<div class="t" style="left:927.78px;top:800.06px;font-size:18px;line-height:21.6px;font-weight:400;color:#000;transform:scaleX(1.0154);transform-origin:0 0;">Running</div>
<div class="t" style="left:1022.58px;top:800.06px;font-size:18px;line-height:21.6px;font-weight:400;color:#000;transform:scaleX(1.0228);transform-origin:0 0;">Manual</div>
<div class="t" style="left:1161.17px;top:800.06px;font-size:18px;line-height:21.6px;font-weight:400;color:#000;transform:scaleX(0.9283);transform-origin:0 0;">Local Syste...</div>
<svg style="position:absolute;left:527.3px;top:825.7px;" width="24" height="24" viewBox="0 0 24 24"><use href="#gear"/></svg>
<div class="t" style="left:554.80px;top:828.56px;font-size:18px;line-height:21.6px;font-weight:400;color:#000;transform:scaleX(0.968);transform-origin:0 0;">Portable Device Enumerator...</div>
<div class="t" style="left:1022.59px;top:828.56px;font-size:18px;line-height:21.6px;font-weight:400;color:#000;transform:scaleX(1.0088);transform-origin:0 0;">Manual (Trig...</div>
<div class="t" style="left:1161.17px;top:828.56px;font-size:18px;line-height:21.6px;font-weight:400;color:#000;transform:scaleX(0.9283);transform-origin:0 0;">Local Syste...</div>
<svg style="position:absolute;left:527.3px;top:854.2px;" width="24" height="24" viewBox="0 0 24 24"><use href="#gear"/></svg>
<div class="t" style="left:554.84px;top:857.06px;font-size:18px;line-height:21.6px;font-weight:400;color:#000;transform:scaleX(0.9640);transform-origin:0 0;">Power</div>
<div class="t" style="left:927.78px;top:857.06px;font-size:18px;line-height:21.6px;font-weight:400;color:#000;transform:scaleX(1.0154);transform-origin:0 0;">Running</div>
<div class="t" style="left:1023.60px;top:857.06px;font-size:18px;line-height:21.6px;font-weight:400;color:#000;transform:scaleX(1.0275);transform-origin:0 0;">Automatic</div>
<div class="t" style="left:1161.17px;top:857.06px;font-size:18px;line-height:21.6px;font-weight:400;color:#000;transform:scaleX(0.9283);transform-origin:0 0;">Local Syste...</div>
<svg style="position:absolute;left:527.3px;top:882.7px;" width="24" height="24" viewBox="0 0 24 24"><use href="#gear"/></svg>
<div class="t" style="left:554.82px;top:885.56px;font-size:18px;line-height:21.6px;font-weight:400;color:#000;transform:scaleX(0.9786);transform-origin:0 0;">Print Spooler</div>
<div class="t" style="left:927.78px;top:885.56px;font-size:18px;line-height:21.6px;font-weight:400;color:#000;transform:scaleX(1.0154);transform-origin:0 0;">Running</div>
<div class="t" style="left:1023.60px;top:885.56px;font-size:18px;line-height:21.6px;font-weight:400;color:#000;transform:scaleX(1.0275);transform-origin:0 0;">Automatic</div>
<div class="t" style="left:1161.17px;top:885.56px;font-size:18px;line-height:21.6px;font-weight:400;color:#000;transform:scaleX(0.9283);transform-origin:0 0;">Local Syste...</div>
<svg style="position:absolute;left:527.3px;top:911.2px;" width="24" height="24" viewBox="0 0 24 24"><use href="#gear"/></svg>
<div class="t" style="left:554.80px;top:914.06px;font-size:18px;line-height:21.6px;font-weight:400;color:#000;transform:scaleX(0.965);transform-origin:0 0;">Printer Extensions and No...</div>
<div class="t" style="left:1022.58px;top:914.06px;font-size:18px;line-height:21.6px;font-weight:400;color:#000;transform:scaleX(1.0228);transform-origin:0 0;">Manual</div>
<div class="t" style="left:1161.17px;top:914.06px;font-size:18px;line-height:21.6px;font-weight:400;color:#000;transform:scaleX(0.9283);transform-origin:0 0;">Local Syste...</div>
<svg style="position:absolute;left:527.3px;top:939.7px;" width="24" height="24" viewBox="0 0 24 24"><use href="#gear"/></svg>
<div class="t" style="left:554.80px;top:942.56px;font-size:18px;line-height:21.6px;font-weight:400;color:#000;transform:scaleX(0.959);transform-origin:0 0;">Problem Reports and Soluti...</div>
<div class="t" style="left:1022.58px;top:942.56px;font-size:18px;line-height:21.6px;font-weight:400;color:#000;transform:scaleX(1.0228);transform-origin:0 0;">Manual</div>
<div class="t" style="left:1161.17px;top:942.56px;font-size:18px;line-height:21.6px;font-weight:400;color:#000;transform:scaleX(0.9283);transform-origin:0 0;">Local Syste...</div>
<svg style="position:absolute;left:527.3px;top:968.2px;" width="24" height="24" viewBox="0 0 24 24"><use href="#gear"/></svg>
<div class="t" style="left:554.80px;top:971.06px;font-size:18px;line-height:21.6px;font-weight:400;color:#000;transform:scaleX(0.981);transform-origin:0 0;">Remote Access Auto Conne...</div>
<div class="t" style="left:1022.58px;top:971.06px;font-size:18px;line-height:21.6px;font-weight:400;color:#000;transform:scaleX(1.0228);transform-origin:0 0;">Manual</div>
<div class="t" style="left:1161.17px;top:971.06px;font-size:18px;line-height:21.6px;font-weight:400;color:#000;transform:scaleX(0.9283);transform-origin:0 0;">Local Syste...</div>
<div style="position:absolute;left:1366px;top:168.9px;width:25.6px;height:825px;box-sizing:border-box;background:#fff;border-left:1.3px solid #d4d4d4;border-right:1.3px solid #d4d4d4"></div>
<div style="position:absolute;left:1366px;top:168.9px;width:25.6px;height:24.6px;box-sizing:border-box;background:#fff;border:1.3px solid #d4d4d4"></div>
<svg style="position:absolute;left:1373.2px;top:178.3px" width="12" height="9" viewBox="0 0 12 9"><path d="M1,7.5 L6,2.2 L11,7.5" fill="none" stroke="#606060" stroke-width="1.8"/></svg>
<div style="position:absolute;left:1366px;top:968.6px;width:25.6px;height:24.8px;box-sizing:border-box;background:#fff;border:1.3px solid #d4d4d4"></div>
<svg style="position:absolute;left:1373.2px;top:976.8px" width="12" height="9" viewBox="0 0 12 9"><path d="M1,1.5 L6,6.8 L11,1.5" fill="none" stroke="#606060" stroke-width="1.8"/></svg>
<div style="position:absolute;left:1366px;top:499.6px;width:25.6px;height:142.5px;box-sizing:border-box;background:#dcdcdc;border:1.7px solid #acacac"></div>
<div style="position:absolute;left:1374px;top:564.9px;width:10.5px;height:2.6px;background:#686868;border-radius:1px"></div>
<div style="position:absolute;left:1374px;top:569.5px;width:10.5px;height:2.6px;background:#686868;border-radius:1px"></div>
<div style="position:absolute;left:1374px;top:574.1px;width:10.5px;height:2.6px;background:#686868;border-radius:1px"></div>
<div style="position:absolute;left:203.4px;top:993.8px;width:1188.2px;height:1.4px;background:#dadada"></div>
<div style="position:absolute;left:203.4px;top:995.2px;width:1188.2px;height:2px;background:#fff"></div>
<div style="position:absolute;left:203.4px;top:997.2px;width:1188.2px;height:27.3px;background:#f0f0f0"></div>
<div style="position:absolute;left:300px;top:997.1px;width:1091.6px;height:1.4px;background:#5f5f5f"></div>
<div style="position:absolute;left:196px;top:996px;width:7.4px;height:28.5px;background:#f0f0f0"></div>
<svg style="position:absolute;left:195px;top:994px" width="220" height="32" viewBox="0 0 220 32"><path d="M103,3.4 L205.6,3.8 L195.5,30.5 L116.3,30.5 Z" fill="#f0f0f0" stroke="#5a5a5a" stroke-width="1.3"/><path d="M5.9,1 L113.8,1 L113.8,3.4 L102.4,30.3 L18.8,30.3 L5.9,3.4 Z" fill="#fff"/><path d="M5.9,3.4 L18.8,30.3 M102.4,30.3 L113.8,3.4" fill="none" stroke="#5a5a5a" stroke-width="1.3"/></svg>
<div class="t" style="left:217.96px;top:1001.68px;font-size:16.5px;line-height:19.8px;font-weight:400;color:#000;transform:scaleX(1.0368);transform-origin:0 0;">Extended</div>
<div class="t" style="left:313.94px;top:1001.68px;font-size:16.5px;line-height:19.8px;font-weight:400;color:#000;transform:scaleX(1.0569);transform-origin:0 0;">Standard</div>
<div style="position:absolute;left:13px;top:1024.3px;width:1381px;height:1.6px;background:#8f9399"></div>
<div style="position:absolute;left:13px;top:1025.9px;width:1381px;height:32.6px;background:#fff;box-sizing:border-box;border-left:1px solid #c9c9c9"></div>
<div style="position:absolute;left:1063.8px;top:1028px;width:1.3px;height:30.5px;background:#dadada"></div>
<div style="position:absolute;left:1263px;top:1028px;width:1.3px;height:30.5px;background:#dadada"></div>
<div style="position:absolute;left:1390.6px;top:1028px;width:1.3px;height:30.5px;background:#dadada"></div>
<div class="t" style="left:15.53px;top:1034.56px;font-size:18px;line-height:21.6px;font-weight:400;color:#000;transform:scaleX(0.9688);transform-origin:0 0;">Stop service OpenText STeMS Service on Local Computer</div>
<div style="position:absolute;left:739px;top:684.2px;width:30px;height:9px;background:#3399ff"></div>
<div style="position:absolute;left:739px;top:693px;width:222px;height:330.5px;box-sizing:border-box;background:#f0f0f0;border:1.5px solid #979797"></div>
<div style="position:absolute;left:784px;top:697px;width:1.3px;height:321px;background:#d5d5d5"></div>
<div style="position:absolute;left:743.8px;top:730.9px;width:212.3px;height:31.8px;box-sizing:border-box;background:#dcebfc;border:1.6px solid #26a0da"></div>
<div class="t" style="left:791.31px;top:703.94px;font-size:17.5px;line-height:21.0px;font-weight:400;color:#6d6d6d;transform:scaleX(0.9861);transform-origin:0 0;">Start</div>
<div class="t" style="left:791.29px;top:736.64px;font-size:17.5px;line-height:21.0px;font-weight:400;color:#000;transform:scaleX(1.0147);transform-origin:0 0;">Stop</div>
<div class="t" style="left:791.34px;top:769.94px;font-size:17.5px;line-height:21.0px;font-weight:400;color:#6d6d6d;transform:scaleX(0.9562);transform-origin:0 0;">Pause</div>
<div class="t" style="left:791.33px;top:803.04px;font-size:17.5px;line-height:21.0px;font-weight:400;color:#6d6d6d;transform:scaleX(0.9734);transform-origin:0 0;">Resume</div>
<div class="t" style="left:791.35px;top:836.04px;font-size:17.5px;line-height:21.0px;font-weight:400;color:#000;transform:scaleX(0.9509);transform-origin:0 0;">Restart</div>
<div class="t" style="left:792.30px;top:874.94px;font-size:17.5px;line-height:21.0px;font-weight:400;color:#000;transform:scaleX(0.9882);transform-origin:0 0;">All Tasks</div>
<div class="t" style="left:791.35px;top:914.24px;font-size:17.5px;line-height:21.0px;font-weight:400;color:#000;transform:scaleX(0.9492);transform-origin:0 0;">Refresh</div>
<div class="t" style="left:791.29px;top:952.44px;font-size:17.5px;line-height:21.0px;font-weight:700;color:#000;transform:scaleX(1.0106);transform-origin:0 0;-webkit-text-stroke:0;">Properties</div>
<div class="t" style="left:791.26px;top:991.64px;font-size:17.5px;line-height:21.0px;font-weight:400;color:#000;transform:scaleX(1.0412);transform-origin:0 0;">Help</div>
<div style="position:absolute;left:784.7px;top:864.2px;width:171.5px;height:1.4px;background:#cdcdcd"></div>
<div style="position:absolute;left:784.7px;top:903.3px;width:171.5px;height:1.4px;background:#cdcdcd"></div>
<div style="position:absolute;left:784.7px;top:942.1px;width:171.5px;height:1.4px;background:#cdcdcd"></div>
<div style="position:absolute;left:784.7px;top:981.2px;width:171.5px;height:1.4px;background:#cdcdcd"></div>
<svg style="position:absolute;left:936px;top:879px" width="8" height="11" viewBox="0 0 8 11"><path d="M0.5,0.5 L7,5.5 L0.5,10.5 Z" fill="#000"/></svg>
</div></body></html>
